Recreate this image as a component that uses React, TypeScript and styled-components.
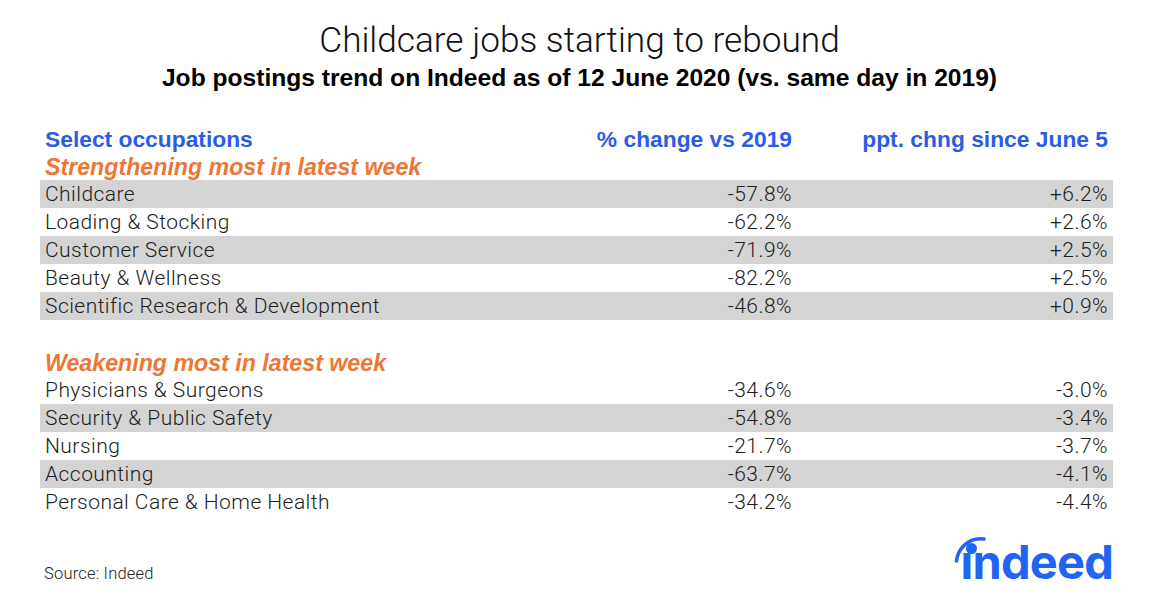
import React from "react";
import styled, { createGlobalStyle } from "styled-components";

const GlobalStyle = createGlobalStyle`
  html, body {
    margin: 0;
    padding: 0;
    background: #ffffff;
  }
  body {
    font-family: Roboto, "Liberation Sans", sans-serif;
    color: #1d1d1d;
  }
`;

const Page = styled.div`
  width: 1159px;
  height: 604px;
  display: flex;
  flex-direction: column;
  overflow: hidden;
`;

const Title = styled.h1`
  margin: 18px 0 0;
  font-family: Roboto, "Liberation Sans", sans-serif;
  font-weight: 300;
  font-size: 35.2px;
  line-height: 44px;
  text-align: center;
  color: #111;
`;

const Subtitle = styled.h2`
  margin: 2px 0 0;
  font-family: "Liberation Sans", Arial, sans-serif;
  font-weight: 700;
  font-size: 24.6px;
  line-height: 28px;
  text-align: center;
  color: #000;
`;

const Table = styled.div`
  margin: 37px 46px 0 40px;
  display: flex;
  flex-direction: column;
`;

const Grid = styled.div`
  display: grid;
  grid-template-columns: 1fr 200px 316px;
  padding: 0 5px;
`;

const HeadRow = styled(Grid)`
  font-family: "Liberation Sans", Arial, sans-serif;
  font-weight: 700;
  font-size: 22.8px;
  line-height: 20px;
  color: #2b5ce6;
`;

const HeadCell = styled.span<{ $right?: boolean }>`
  text-align: ${(p) => (p.$right ? "right" : "left")};
  white-space: nowrap;
`;

const Section = styled.div<{ $gapTop: number; $gapBottom: number }>`
  margin-top: ${(p) => p.$gapTop}px;
  margin-bottom: ${(p) => p.$gapBottom}px;
  padding: 0 5px;
  font-family: "Liberation Sans", Arial, sans-serif;
  font-weight: 700;
  font-style: italic;
  font-size: 23.2px;
  line-height: 20px;
  color: #ee7635;
  white-space: nowrap;
`;

const Row = styled(Grid)<{ $shaded: boolean }>`
  height: 28px;
  line-height: 28px;
  font-family: Roboto, "Liberation Sans", sans-serif;
  font-weight: 300;
  font-size: 21px;
  letter-spacing: 0.45px;
  color: #1d1d1d;
  background: ${(p) => (p.$shaded ? "#d4d4d4" : "transparent")};
`;

const Cell = styled.span<{ $right?: boolean }>`
  text-align: ${(p) => (p.$right ? "right" : "left")};
  white-space: nowrap;
`;

const Footer = styled.div`
  margin-top: 23px;
  padding: 0 46px 0 44px;
  display: flex;
  justify-content: space-between;
  align-items: baseline;
`;

const Source = styled.span`
  font-family: Roboto, "Liberation Sans", sans-serif;
  font-weight: 300;
  font-size: 16.5px;
  letter-spacing: 0.2px;
  line-height: 18px;
  color: #222;
`;

const Logo = styled.div`
  position: relative;
  font-family: Inter, "Noto Sans", sans-serif;
  font-weight: 700;
  font-size: 47px;
  line-height: 46px;
  letter-spacing: -0.8px;
  color: #2164f3;
`;

const LogoMark = styled.svg`
  position: absolute;
  left: -6px;
  top: -5px;
  overflow: visible;
`;

type Item = { name: string; change: string; ppt: string };

const strengthening: Item[] = [
  { name: "Childcare", change: "-57.8%", ppt: "+6.2%" },
  { name: "Loading & Stocking", change: "-62.2%", ppt: "+2.6%" },
  { name: "Customer Service", change: "-71.9%", ppt: "+2.5%" },
  { name: "Beauty & Wellness", change: "-82.2%", ppt: "+2.5%" },
  { name: "Scientific Research & Development", change: "-46.8%", ppt: "+0.9%" },
];

const weakening: Item[] = [
  { name: "Physicians & Surgeons", change: "-34.6%", ppt: "-3.0%" },
  { name: "Security & Public Safety", change: "-54.8%", ppt: "-3.4%" },
  { name: "Nursing", change: "-21.7%", ppt: "-3.7%" },
  { name: "Accounting", change: "-63.7%", ppt: "-4.1%" },
  { name: "Personal Care & Home Health", change: "-34.2%", ppt: "-4.4%" },
];

// shadeFirst: whether the first row of the group carries the grey band
const Rows = ({ items, shadeFirst }: { items: Item[]; shadeFirst: boolean }) => (
  <>
    {items.map((it, i) => (
      <Row key={it.name} $shaded={(i % 2 === 0) === shadeFirst}>
        <Cell>{it.name}</Cell>
        <Cell $right>{it.change}</Cell>
        <Cell $right>{it.ppt}</Cell>
      </Row>
    ))}
  </>
);

const IndeedLogo = () => (
  <Logo>
    <LogoMark width="40" height="32" viewBox="0 0 40 32">
      <path
        d="M1.5 27 C 3 14, 14 3, 29 5"
        fill="none"
        stroke="#2164f3"
        strokeWidth="3.5"
        strokeLinecap="round"
      />
      <circle cx="16.5" cy="14.5" r="5.5" fill="#2164f3" />
    </LogoMark>
    ındeed
  </Logo>
);

export default function App() {
  return (
    <Page>
      <GlobalStyle />
      <Title>Childcare jobs starting to rebound</Title>
      <Subtitle>
        Job postings trend on Indeed as of 12 June 2020 (vs. same day in 2019)
      </Subtitle>
      <Table>
        <HeadRow>
          <HeadCell>Select occupations</HeadCell>
          <HeadCell $right>% change vs 2019</HeadCell>
          <HeadCell $right>ppt. chng since June 5</HeadCell>
        </HeadRow>
        <Section $gapTop={8} $gapBottom={3}>
          Strengthening most in latest week
        </Section>
        <Rows items={strengthening} shadeFirst />
        <Section $gapTop={33} $gapBottom={3}>
          Weakening most in latest week
        </Section>
        <Rows items={weakening} shadeFirst={false} />
      </Table>
      <Footer>
        <Source>Source: Indeed</Source>
        <IndeedLogo />
      </Footer>
    </Page>
  );
}
